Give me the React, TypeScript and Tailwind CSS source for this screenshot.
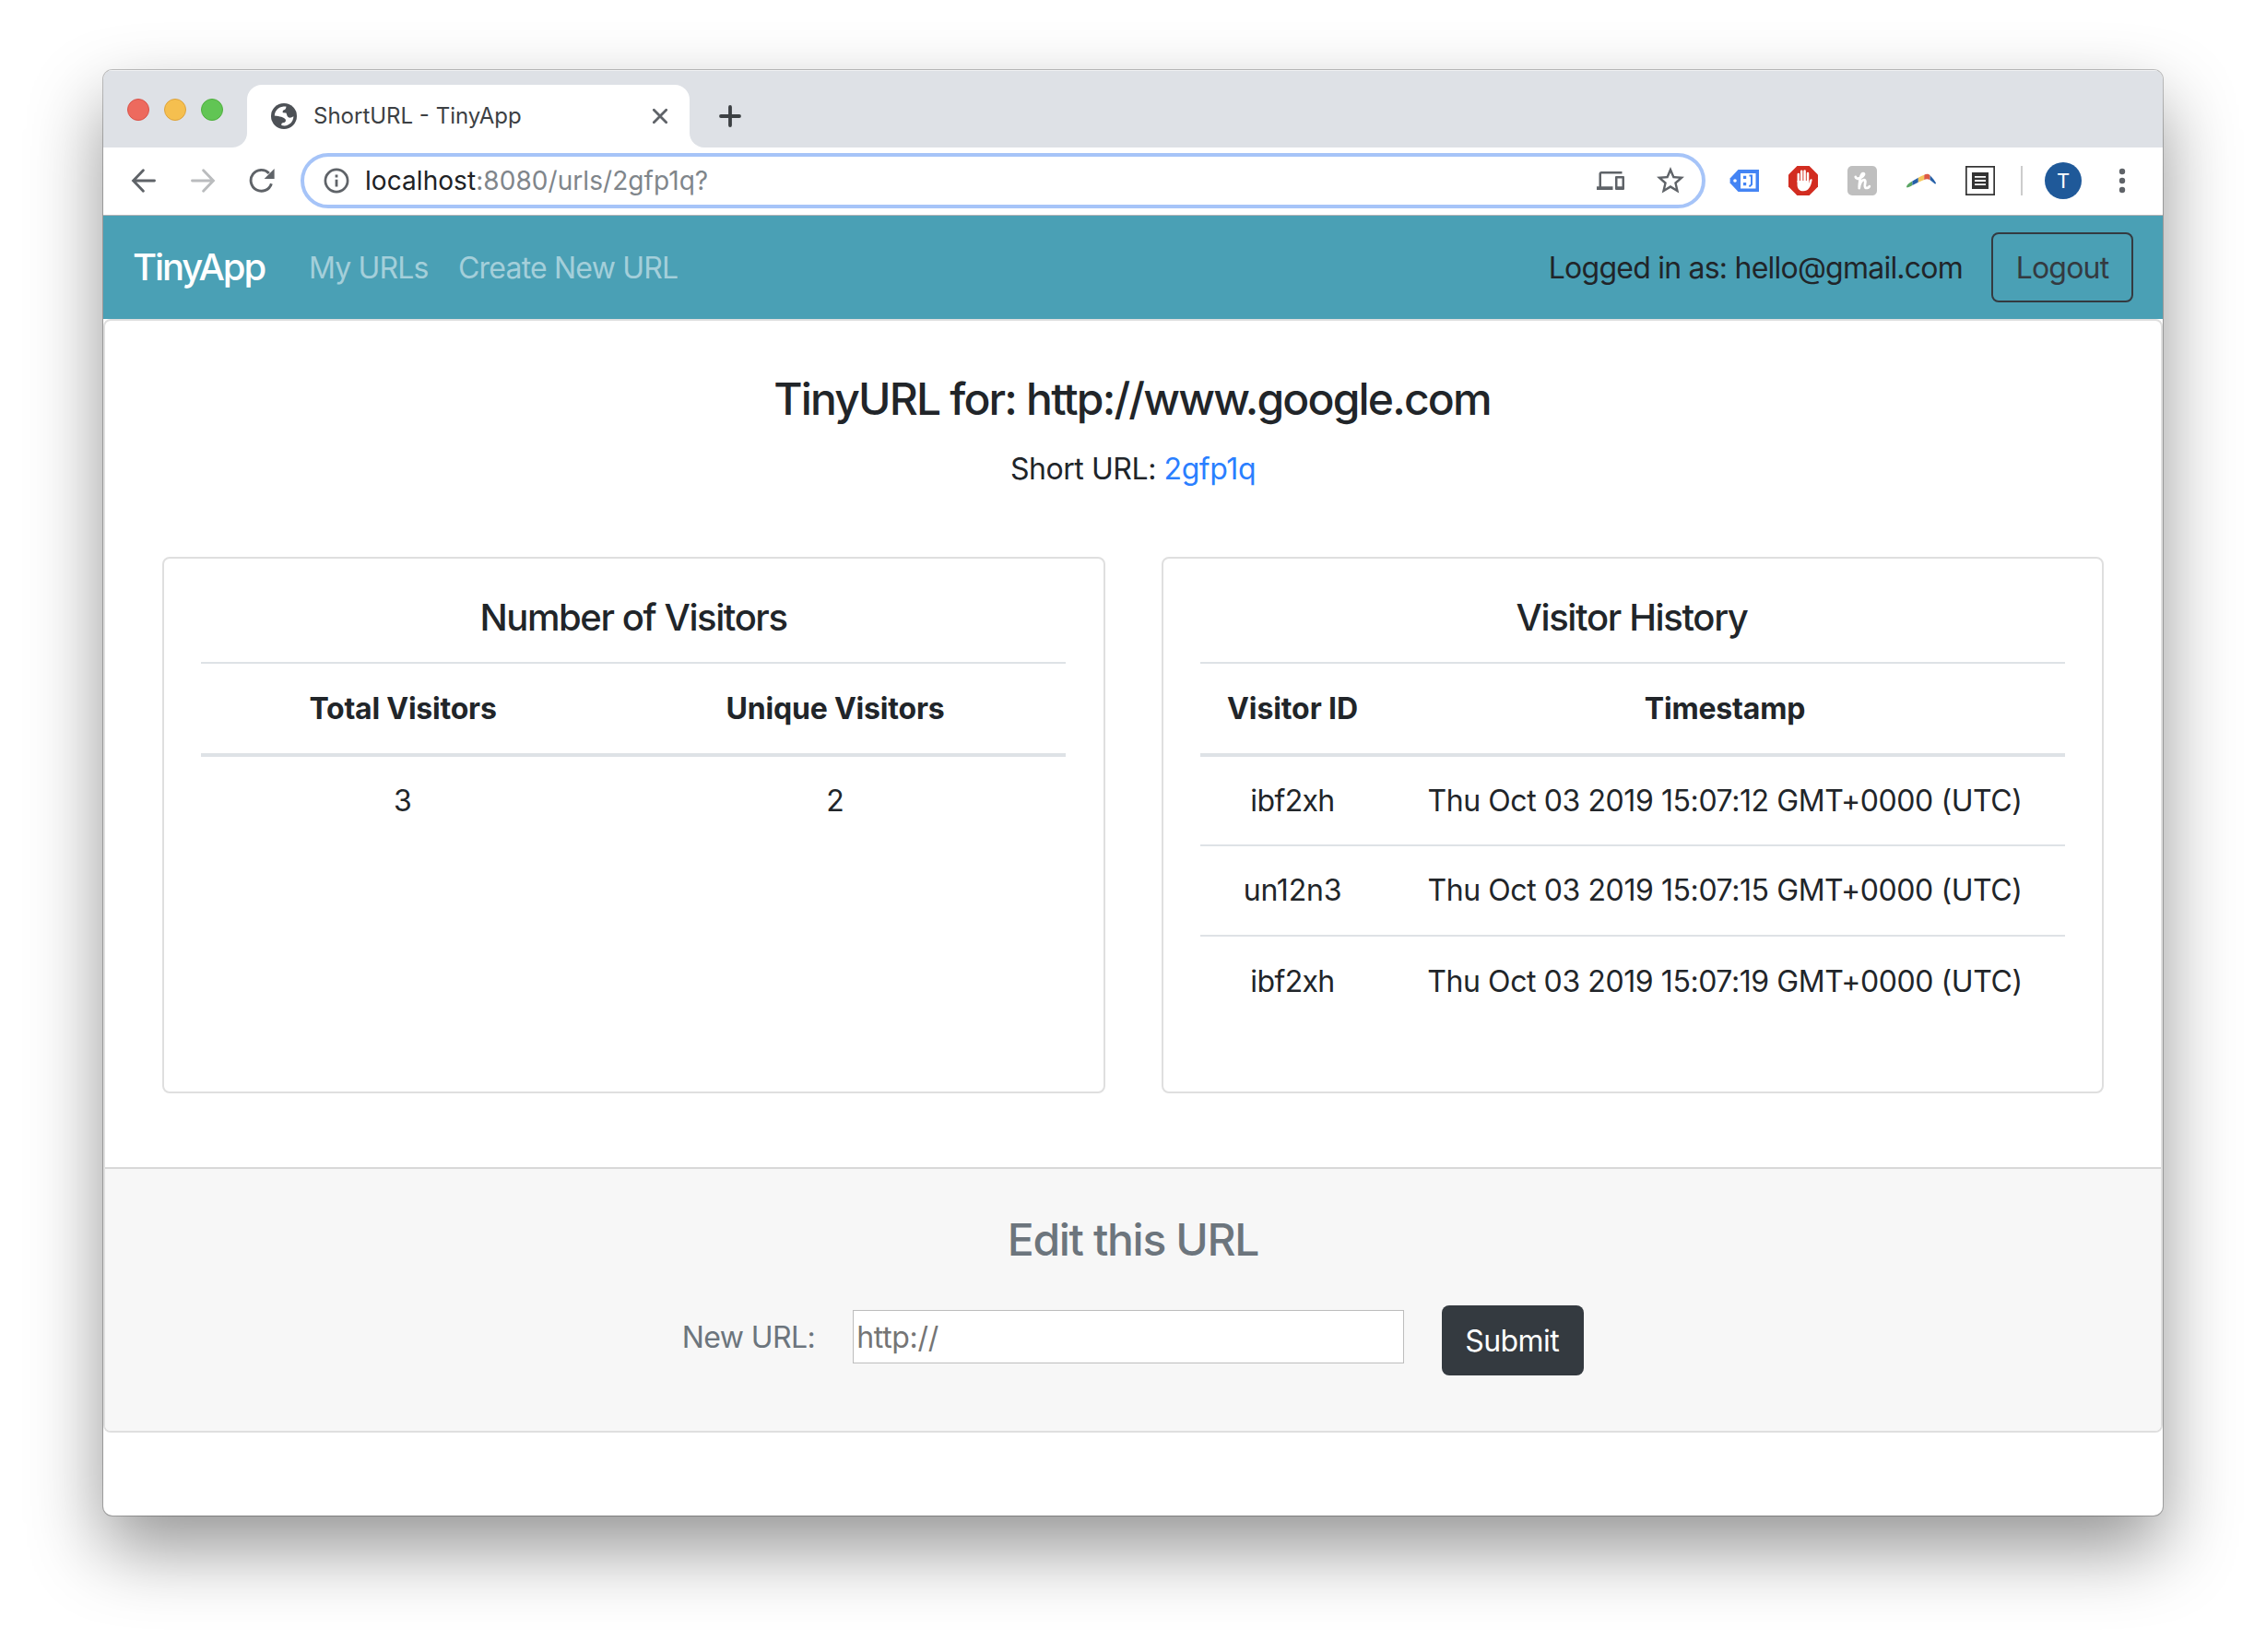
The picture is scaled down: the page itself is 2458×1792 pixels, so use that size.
import React from "react";
import { MdDevices, MdStarBorder } from "react-icons/md";

const visits = [
  { id: "ibf2xh", time: "Thu Oct 03 2019 15:07:12 GMT+0000 (UTC)", idClass: "tracking-[-0.63px]" },
  { id: "un12n3", time: "Thu Oct 03 2019 15:07:15 GMT+0000 (UTC)", idClass: "tracking-[-0.2px]" },
  { id: "ibf2xh", time: "Thu Oct 03 2019 15:07:19 GMT+0000 (UTC)", idClass: "tracking-[-0.63px]" },
];

function GlobeIcon() {
  return (
    <svg width="28" height="28" viewBox="0 0 28 28">
      <circle cx="14" cy="14" r="14" fill="#4d5156" />
      <path
        fill="#fff"
        d="M3.8 13.6C4 8 8 4 13.5 3.4L16.4 3.6C16.6 6 15.2 7 13.6 7.6C12.5 8 12.6 9.5 12.8 10.2L16.4 10.6C17.3 12.5 17.2 13.9 18.5 15C20 16.2 22.5 15.6 24.4 14.3C24.2 20 20 24.2 14.5 24.5L11.4 24C10.8 22 12 21.3 14 21C16.3 20.6 16.5 18 15 16.8C13.5 15.4 10 14.2 3.8 13.6Z"
      />
    </svg>
  );
}

function ArrowIcon({ className }: { className: string }) {
  return (
    <svg width="28" height="28" viewBox="0 0 28 28" fill="none" stroke="currentColor" strokeWidth="2.9" strokeLinecap="round" strokeLinejoin="miter" className={className}>
      <path d="M25.5 14H3.2M13.4 2.8L2.6 14L13.4 25.2" />
    </svg>
  );
}

function ReloadIcon() {
  return (
    <svg width="28" height="28" viewBox="0 0 28 28" className="text-[#5f6368]">
      <path d="M24.4 17.2A11.4 11.4 0 1 1 21.8 6" fill="none" stroke="currentColor" strokeWidth="2.9" strokeLinecap="butt" />
      <path d="M27.6 1V12H16.6Z" fill="currentColor" />
    </svg>
  );
}

function InfoIcon() {
  return (
    <svg width="28" height="28" viewBox="0 0 28 28" className="text-[#5f6368]">
      <circle cx="14" cy="14" r="12.1" fill="none" stroke="currentColor" strokeWidth="2.7" />
      <path d="M12.6 12.8h2.8v7.6h-2.8zM12.6 7.6h2.8v2.8h-2.8z" fill="currentColor" />
    </svg>
  );
}

function TagIcon() {
  return (
    <svg width="32" height="24" viewBox="0 0 32 24">
      <path d="M9.5 0H32V24H9.5L0.6 14.5V9.5Z" fill="#4484f4" />
      <rect x="12" y="4" width="16.5" height="16.5" fill="#fff" />
      <circle cx="6" cy="12" r="1.8" fill="#fff" />
      <path d="M15 6.8h3.2v3.2h-3.2zM15 14h3.2v3.2h-3.2z" fill="#4484f4" />
      <path d="M21.5 6.4H24V16.2L22.4 17.8H21.2" fill="none" stroke="#4484f4" strokeWidth="2" />
    </svg>
  );
}

function BlockerIcon() {
  return (
    <svg width="32" height="32" viewBox="0 0 32 32">
      <path d="M9.4 0H22.6L32 9.4V22.6L22.6 32H9.4L0 22.6V9.4Z" fill="#d22d21" />
      <path d="M10.8 17V9M14.2 16V5.8M17.6 16V5.6M21 17V8" stroke="#fff" strokeWidth="2.5" strokeLinecap="round" />
      <path d="M9.55 16H22.2V19L23.2 15.6C23.8 13.8 25.8 14 25.6 15.4C25 18.6 24.2 21.6 22 24.6C20.6 26.4 19 27.3 16.2 27.3C12 27.3 9.55 24.4 9.55 20.4Z" fill="#fff" />
    </svg>
  );
}

function HoneyIcon() {
  return (
    <svg width="32" height="32" viewBox="0 0 32 32">
      <rect width="32" height="32" rx="5" fill="#bfbfbf" />
      <path
        d="M8.8 12C9.2 14.2 12 14.2 14.4 12.8C18 10.7 19 8.2 17 8.2C14.6 8.2 13.2 12.6 12.7 24C13.2 19 15.4 15 18.2 15.2C21 15.5 17.6 21.4 19.2 23.2C20.4 24.6 22.8 23.8 23.8 22.2"
        fill="none"
        stroke="#fff"
        strokeWidth="2.8"
        strokeLinecap="round"
        strokeLinejoin="round"
      />
    </svg>
  );
}

function BoomerangIcon() {
  return (
    <svg width="32" height="16" viewBox="0 0 32 16">
      <path d="M0 14.6C0 12.6 3 10.4 6.4 8.4V13C4.2 14.2 1.6 15.4 0.6 15.4Z" fill="#5aa563" />
      <path d="M6.4 8.4L12.8 4.8V9.8L6.4 13Z" fill="#2560a8" />
      <path d="M12.8 4.8C15 3.6 17 2.6 19.2 1.8V7L12.8 9.8Z" fill="#f4c75c" />
      <path d="M19.2 1.8C21.2 0.4 23.6 0.2 25.6 2.2V7.2C23.4 6 21.4 6 19.2 7Z" fill="#dc5a45" />
      <path d="M25.6 2.2C28 4.6 30.6 8 32 10.4C32 11.4 31.2 11.6 30.6 11.2L25.6 7.2Z" fill="#2560a8" />
    </svg>
  );
}

function ReaderIcon() {
  return (
    <svg width="32" height="32" viewBox="0 0 32 32">
      <rect x="0.8" y="0.8" width="30.4" height="30.4" fill="#fff" stroke="#333" strokeWidth="1.8" />
      <rect x="7" y="7" width="18" height="18" fill="#333" />
      <path d="M10 11.8H22M10 16H22M10 20.2H22" stroke="#fff" strokeWidth="1.8" />
    </svg>
  );
}

function TabStrip() {
  return (
    <div className="flex h-[84px] items-start bg-[#dee1e6] shadow-[inset_0_1px_0_#f1f2f4]">
      <div className="flex gap-4 pl-[26px] pt-[31px]">
        <span className="size-6 rounded-full border border-[#d9544b] bg-[#ed6a5e]" />
        <span className="size-6 rounded-full border border-[#dda33c] bg-[#f5bf4f]" />
        <span className="size-6 rounded-full border border-[#4faf3e] bg-[#61c554]" />
      </div>
      <div className="ml-[10px] mt-4 flex h-[68px] items-end">
        <div className="size-4 bg-white">
          <div className="size-4 rounded-br-2xl bg-[#dee1e6]" />
        </div>
        <div className="flex h-[68px] w-[480px] items-center rounded-t-2xl bg-white pl-[26px] pr-[22px]">
          <GlobeIcon />
          <span className="ml-[18px] text-2xl text-[#3c4043]">ShortURL - TinyApp</span>
          <svg width="20" height="20" viewBox="0 0 20 20" className="ml-auto" stroke="#5f6368" strokeWidth="2.8" strokeLinecap="round">
            <path d="M3.3 3.3L16.7 16.7M16.7 3.3L3.3 16.7" />
          </svg>
        </div>
        <div className="size-4 bg-white">
          <div className="size-4 rounded-bl-2xl bg-[#dee1e6]" />
        </div>
      </div>
      <svg width="24" height="24" viewBox="0 0 24 24" className="ml-4 mt-[38px]" stroke="#3c4043" strokeWidth="3.8" strokeLinecap="round">
        <path d="M12 2V22M2 12H22" />
      </svg>
    </div>
  );
}

function Toolbar() {
  return (
    <div className="flex h-[74px] items-center border-b border-[#b6b4b6] bg-white pb-px pl-[30px]">
      <ArrowIcon className="text-[#5f6368]" />
      <ArrowIcon className="ml-9 rotate-180 text-[#babcbe]" />
      <div className="ml-[36px]">
        <ReloadIcon />
      </div>
      <div className="ml-[28px] flex h-[60px] w-[1524px] items-center rounded-full border-4 border-[#a6c4f8] pl-[21px] pr-4">
        <InfoIcon />
        <div className="ml-[17px] flex-1 text-[28px] tracking-[0.06px] text-[#80868b]">
          <span className="text-[#202124]">localhost</span>:8080/urls/2gfp1q?
        </div>
        <MdDevices size={30} color="#5f6368" />
        <MdStarBorder size={36} color="#5f6368" className="ml-8" />
      </div>
      <div className="ml-[26px] flex items-center gap-8">
        <TagIcon />
        <BlockerIcon />
        <HoneyIcon />
        <BoomerangIcon />
        <ReaderIcon />
      </div>
      <div className="ml-7 h-8 w-0.5 bg-[#cccccc]" />
      <div className="ml-6 flex size-10 items-center justify-center rounded-full bg-[#1f5999] text-[22px] text-white">T</div>
      <svg width="8" height="28" viewBox="0 0 8 28" className="ml-[40px]" fill="#5f6368">
        <circle cx="4" cy="4" r="3.2" />
        <circle cx="4" cy="14" r="3.2" />
        <circle cx="4" cy="24" r="3.2" />
      </svg>
    </div>
  );
}

function NavBar() {
  return (
    <nav className="flex h-28 items-center bg-[#4aa0b5] px-8">
      <a className="w-[191px] text-[40px] font-medium tracking-[-2.1px] text-white">TinyApp</a>
      <a className="w-[162px] pt-0.5 tracking-[-0.84px] text-white/50">My URLs</a>
      <a className="pt-0.5 tracking-[-0.8px] text-white/50">Create New URL</a>
      <span className="ml-auto pt-0.5 tracking-[-0.77px]">Logged in as: hello@gmail.com</span>
      <button className="ml-[31px] h-[76px] w-[154px] rounded-lg border-2 border-[#343a40] pt-0.5 tracking-[-0.8px] text-[#343a40]">
        Logout
      </button>
    </nav>
  );
}

function VisitorCards() {
  return (
    <div className="mt-[71px] flex gap-[61px] px-[62px]">
      <section className="h-[582px] w-[1023px] rounded-lg border-2 border-[#dfdfdf] p-10 pr-[41px]">
        <h5 className="mb-6 text-center text-[40px] leading-[48px] font-medium tracking-[-1.42px]">Number of Visitors</h5>
        <table className="w-full table-fixed border-collapse text-center leading-[48px]">
          <colgroup>
            <col className="w-[438px]" />
            <col />
          </colgroup>
          <thead>
            <tr className="h-[100px] border-t-2 border-b-4 border-[#dee2e6]">
              <th className="font-bold tracking-[-0.22px]">Total Visitors</th>
              <th className="font-bold tracking-[-0.2px]">Unique Visitors</th>
            </tr>
          </thead>
          <tbody>
            <tr className="h-[98px]">
              <td>3</td>
              <td>2</td>
            </tr>
          </tbody>
        </table>
      </section>
      <section className="h-[582px] w-[1022px] rounded-lg border-2 border-[#dfdfdf] p-10">
        <h5 className="mb-6 pr-[2px] text-center text-[40px] leading-[48px] font-medium tracking-[-1.36px]">Visitor History</h5>
        <table className="w-full table-fixed border-collapse text-center leading-[48px]">
          <colgroup>
            <col className="w-[200px]" />
            <col />
          </colgroup>
          <thead>
            <tr className="h-[100px] border-t-2 border-b-4 border-[#dee2e6]">
              <th className="font-bold tracking-[-0.09px]">Visitor ID</th>
              <th className="font-bold tracking-[-0.17px]">Timestamp</th>
            </tr>
          </thead>
          <tbody>
            {visits.map((v, i) => (
              <tr key={i} className="h-[98px] border-b-2 border-[#dee2e6] last:border-b-0">
                <td className={v.idClass}>{v.id}</td>
                <td className="tracking-[-0.42px]">{v.time}</td>
              </tr>
            ))}
          </tbody>
        </table>
      </section>
    </div>
  );
}

function EditFooter() {
  return (
    <footer className="mt-20 h-[286px] border-t-2 border-[#d8d8d8] bg-[#f7f7f7] pt-12 text-[#6c757d]">
      <h4 className="text-center text-[48px] leading-[58px] font-medium tracking-[-1.33px]">Edit this URL</h4>
      <form className="mt-[42px] flex items-start justify-center">
        <label className="mt-[11px] leading-[48px] tracking-[-0.6px]">New URL:</label>
        <input
          type="text"
          placeholder="http://"
          className="ml-[41px] mt-[5px] h-[58px] w-[598px] border border-[#bdbdbd] bg-white pl-[3px] tracking-[-0.3px] placeholder:text-[#757575]"
        />
        <button type="button" className="ml-[41px] h-[76px] w-[154px] rounded-lg bg-[#343a40] pt-0.5 pr-2 pl-1.5 tracking-[-0.57px] text-white">
          Submit
        </button>
      </form>
    </footer>
  );
}

export default function App() {
  return (
    <div className="h-[1792px] w-[2458px] overflow-hidden bg-white px-28 pt-[76px] font-['Inter',sans-serif] text-[32px] leading-[48px] text-[#212529]">
      <div className="h-[1568px] overflow-hidden rounded-[10px] bg-white shadow-[0_0_0_1px_rgba(0,0,0,0.24),0_36px_80px_rgba(0,0,0,0.42)]">
        <TabStrip />
        <Toolbar />
        <NavBar />
        <main className="h-[1208px] overflow-hidden rounded-lg border-2 border-[#dfdfdf]">
          <h3 className="mt-14 pr-0.5 text-center text-[48px] leading-[58px] font-medium tracking-[-1.82px]">
            TinyURL for: http://www.google.com
          </h3>
          <p className="mt-[23px] text-center tracking-[-0.43px]">
            Short URL: <a className="text-[#2a7fff]">2gfp1q</a>
          </p>
          <VisitorCards />
          <EditFooter />
        </main>
      </div>
    </div>
  );
}
